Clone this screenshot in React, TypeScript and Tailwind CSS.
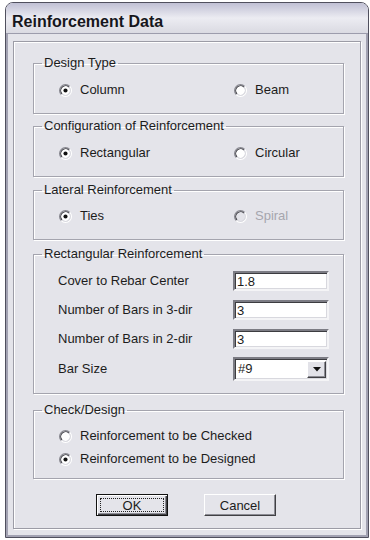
import React from 'react';

// classic etched radio button, drawn in svg
const Radio: React.FC<{ checked?: boolean; disabled?: boolean }> = ({ checked, disabled }) => (
  <svg width="13" height="13" viewBox="0 0 12 12" className="shrink-0">
    <circle cx="6" cy="6" r="4.2" fill={disabled ? '#e4e4ea' : '#ffffff'} />
    <path d="M2.11 9.89 A5.5 5.5 0 0 1 9.89 2.11" fill="none" stroke="#8a8a92" strokeWidth="1" />
    <path d="M9.89 2.11 A5.5 5.5 0 0 1 2.11 9.89" fill="none" stroke="#ffffff" strokeWidth="1" />
    <path d="M2.82 9.18 A4.5 4.5 0 0 1 9.18 2.82" fill="none" stroke="#404046" strokeWidth="1" />
    <path d="M9.18 2.82 A4.5 4.5 0 0 1 2.82 9.18" fill="none" stroke="#d8d8de" strokeWidth="1" />
    {checked && <circle cx="6" cy="6" r="1.9" fill="#111111" />}
  </svg>
);

const Option: React.FC<{ label: string; checked?: boolean; disabled?: boolean; wide?: boolean }> = ({
  label,
  checked,
  disabled,
  wide,
}) => (
  <div className={`flex items-center gap-[8px] h-[20px] ${wide ? 'w-[175px]' : ''}`}>
    <Radio checked={checked} disabled={disabled} />
    <span className={disabled ? 'text-[#a6a6ae]' : ''}>{label}</span>
  </div>
);

const Group: React.FC<{ title: string; className?: string; children: React.ReactNode }> = ({
  title,
  className,
  children,
}) => (
  <fieldset
    className={`ml-[19px] w-[311px] border border-[#a4a4ae] px-[8px] shadow-[inset_1px_1px_0_#ffffff,1px_1px_0_#ffffff] ${className ?? ''}`}
  >
    <legend className="px-[2px] leading-[16px]">{title}</legend>
    {children}
  </fieldset>
);

const sunken =
  'border-2 border-t-[#7c7c84] border-l-[#7c7c84] border-b-[#f4f4f6] border-r-[#f4f4f6] shadow-[inset_1px_1px_0_#3c3c40,inset_-1px_-1px_0_#d8d8de]';

const Field: React.FC<{ label: string; value: string }> = ({ label, value }) => (
  <div className="flex items-center h-[20px]">
    <span className="w-[191px] pl-[16px]">{label}</span>
    <input
      readOnly
      value={value}
      className={`w-[96px] h-[20px] bg-white px-[2px] outline-none text-[13px] font-['Liberation_Sans',Arial,sans-serif] text-[#1c1c1c] ${sunken}`}
    />
  </div>
);

export default function App() {
  return (
    <div className="w-[370px] h-[540px] bg-white pt-[2px] pl-[5px] pr-[1px] pb-[2px] font-['Liberation_Sans',Arial,sans-serif] text-[13px] text-[#1c1c1c]">
      <div className="h-full flex flex-col border border-[#50505e] rounded-t-[8px] overflow-hidden">
        {/* title bar */}
        <div className="h-[31px] shrink-0 bg-gradient-to-b from-[#c0c0d4] via-[#ececf2] to-[#dadae2] border-b border-[#9c9cac] pl-[6px] pt-[10px] text-[16px] font-bold leading-[18px] text-[#16161c]">
          Reinforcement Data
        </div>

        {/* body */}
        <div className="flex-1 flex flex-col bg-[#e4e4ea] border-x-2 border-b-2 border-[#a2a2b2] pl-[5px] pr-[5px] pt-[7px] pb-[6px]">
          <div className="flex-1 flex flex-col border border-[#9c9ca6] shadow-[inset_1px_1px_0_#ffffff,1px_1px_0_#ffffff]">
            <Group title="Design Type" className="mt-[13px] pt-[9px] pb-[13px]">
              <div className="flex pl-[17px]">
                <Option label="Column" checked wide />
                <Option label="Beam" />
              </div>
            </Group>

            <Group title="Configuration of Reinforcement" className="mt-[4px] pt-[9px] pb-[13px]">
              <div className="flex pl-[17px]">
                <Option label="Rectangular" checked wide />
                <Option label="Circular" />
              </div>
            </Group>

            <Group title="Lateral Reinforcement" className="mt-[5px] pt-[8px] pb-[13px]">
              <div className="flex pl-[17px]">
                <Option label="Ties" checked wide />
                <Option label="Spiral" disabled />
              </div>
            </Group>

            <Group title="Rectangular Reinforcement" className="mt-[6px] pt-[9px] pb-[12px]">
              <div className="flex flex-col gap-[9px]">
                <Field label="Cover to Rebar Center" value="1.8" />
                <Field label="Number of Bars in 3-dir" value="3" />
                <Field label="Number of Bars in 2-dir" value="3" />
              </div>
              <div className="flex items-center h-[24px] mt-[8px]">
                <span className="w-[191px] pl-[16px]">Bar Size</span>
                <div className={`w-[96px] h-[24px] bg-white flex items-center ${sunken}`}>
                  <span className="pl-[3px]">#9</span>
                  <div className="ml-auto mr-[1px] w-[19px] h-[17px] bg-[#e2e2e8] border border-t-white border-l-white border-b-[#404044] border-r-[#404044] shadow-[inset_-1px_-1px_0_#8c8c94] flex items-center justify-center">
                    <svg width="8" height="5" viewBox="0 0 8 5">
                      <path d="M0 0 H8 L4 4.5 Z" fill="#111111" />
                    </svg>
                  </div>
                </div>
              </div>
            </Group>

            <Group title="Check/Design" className="mt-[8px] pt-[8px] pb-[9px]">
              <div className="flex flex-col gap-[3px] pl-[17px]">
                <Option label="Reinforcement to be Checked" />
                <Option label="Reinforcement to be Designed" checked />
              </div>
            </Group>

            <div className="flex pl-[82px] gap-[36px] mt-[15px]">
              <button className="w-[72px] h-[22px] bg-[#e4e4ea] border border-[#111111] shadow-[inset_1px_1px_0_#ffffff,inset_-1px_-1px_0_#404044,inset_-2px_-2px_0_#8c8c94] flex items-center justify-center p-[3px]">
                <span className="w-full h-full border border-dotted border-[#222222] flex items-center justify-center leading-none">
                  OK
                </span>
              </button>
              <button className="w-[72px] h-[22px] bg-[#e4e4ea] border border-t-white border-l-white border-b-[#404044] border-r-[#404044] shadow-[inset_-1px_-1px_0_#8c8c94] flex items-center justify-center leading-none">
                Cancel
              </button>
            </div>
          </div>
        </div>
      </div>
    </div>
  );
}
